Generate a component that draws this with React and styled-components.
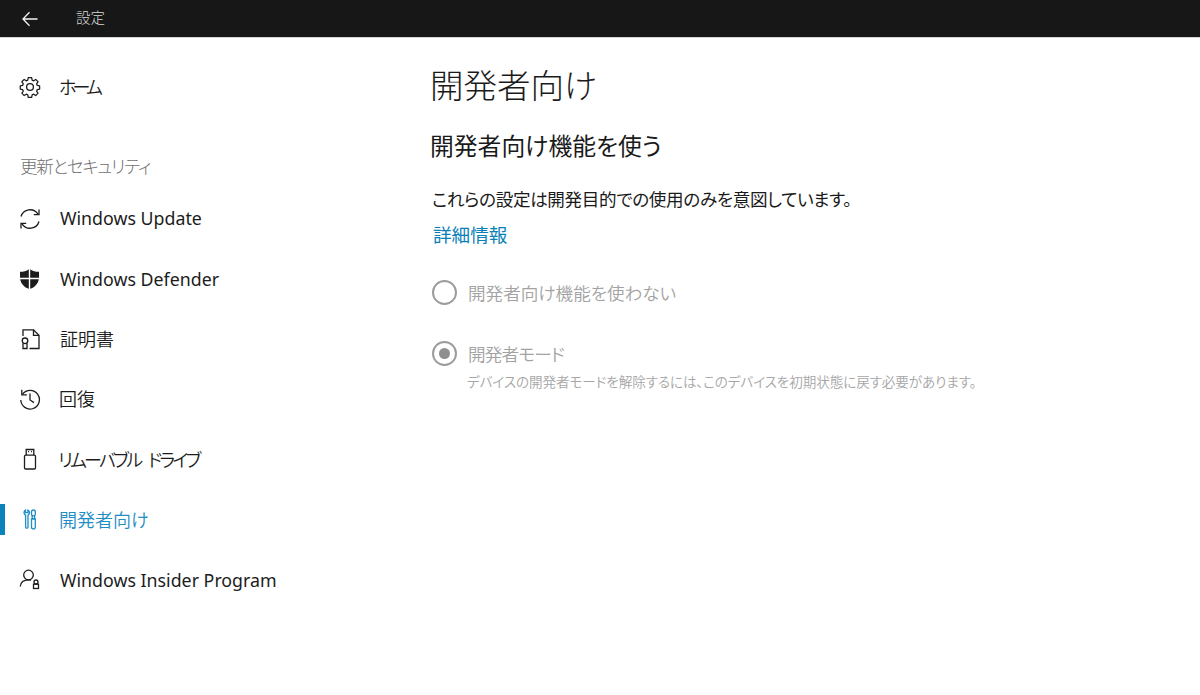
import React from "react";
import styled, { createGlobalStyle } from "styled-components";

const Global = createGlobalStyle`
  html, body { margin: 0; padding: 0; background: #fff; }
  body {
    font-family: "Noto Sans CJK JP", "Noto Sans", sans-serif;
    font-feature-settings: "palt";
    color: #1a1a1a;
  }
`;

const Page = styled.div`
  width: 1200px;
  height: 695px;
  overflow: hidden;
  display: flex;
  flex-direction: column;
`;

const TitleBar = styled.header`
  height: 37px;
  flex: none;
  display: flex;
  align-items: center;
  background: #171717;
  border-bottom: 1px solid #d4d4d4;
  padding-left: 22px;
`;

const BackIcon = styled.svg`
  width: 16px;
  height: 16px;
  margin-right: 38px;
  color: #f2f2f2;
`;

const TitleText = styled.span`
  font-size: 14.5px;
  font-weight: 300;
  margin-bottom: 4px;
  color: #d6d6d6;
`;

const Body = styled.div`
  flex: 1;
  display: flex;
`;

const Sidebar = styled.nav`
  width: 430px;
  flex: none;
  padding-top: 19px;
  display: flex;
  flex-direction: column;
`;

const NavRow = styled.div`
  position: relative;
  height: 60px;
  display: flex;
  align-items: center;
  padding-left: 19px;
  color: ${(p) => (p.$active ? "#1f8ec4" : "#1c1c1c")};
  &::before {
    content: "";
    display: ${(p) => (p.$active ? "block" : "none")};
    position: absolute;
    left: 0;
    top: 15px;
    width: 5px;
    height: 31px;
    background: #0a83bd;
  }
`;

const NavLabel = styled.span`
  font-family: ${(p) => (p.$latin ? '"Noto Sans", sans-serif' : '"Noto Sans CJK JP", sans-serif')};
  font-size: ${(p) => (p.$latin ? 17.8 : 18)}px;
  font-weight: ${(p) => (p.$latin ? 400 : 350)};
  letter-spacing: ${(p) => p.$spacing || 0}px;
  word-spacing: ${(p) => p.$wordSpacing || 0}px;
  margin-bottom: ${(p) => p.$lift ?? 2}px;
  margin-top: ${(p) => p.$drop || 0}px;
`;

const NavIcon = styled.svg`
  width: 22px;
  height: 22px;
  flex: none;
  margin-right: ${(p) => p.$gap || 19}px;
  fill: none;
  stroke: currentColor;
  stroke-width: 1.3;
`;

const SectionLabel = styled.div`
  height: 42px;
  margin: 27px 0 3px;
  padding-left: 20px;
  display: flex;
  align-items: center;
  font-size: 17.5px;
  font-weight: 300;
  letter-spacing: -1.2px;
  color: #6f6f6f;
`;

const Main = styled.main`
  flex: 1;
  padding-top: 21px;
  display: flex;
  flex-direction: column;
  align-items: flex-start;
`;

const Heading = styled.h1`
  margin: 0;
  font-size: 33.5px;
  line-height: 50px;
  font-weight: 300;
  color: #1a1a1a;
`;

const SubHeading = styled.h2`
  margin: 18px 0 0 0;
  font-size: 23.8px;
  line-height: 36px;
  font-weight: 400;
  color: #1a1a1a;
`;

const Description = styled.p`
  margin: 23px 0 0 2px;
  font-size: 17.6px;
  line-height: 26px;
  letter-spacing: -0.35px;
  font-weight: 400;
  color: #1a1a1a;
`;

const MoreLink = styled.a`
  margin: 8px 0 0 3px;
  font-size: 18.6px;
  line-height: 28px;
  color: #0a7fb8;
  font-weight: 400;
`;

const RadioRow = styled.div`
  display: flex;
  align-items: center;
  margin: ${(p) => p.$top}px 0 0 2px;
  height: 26px;
`;

const RadioCircle = styled.span`
  width: 25px;
  height: 25px;
  box-sizing: border-box;
  flex: none;
  border-radius: 50%;
  border: 2.5px solid #9c9c9c;
  margin-right: 11px;
  display: flex;
  align-items: center;
  justify-content: center;
  &::after {
    content: "";
    display: ${(p) => (p.$checked ? "block" : "none")};
    width: 11px;
    height: 11px;
    border-radius: 50%;
    background: #8f8f8f;
  }
`;

const RadioLabel = styled.span`
  font-size: 17.6px;
  font-weight: 350;
  letter-spacing: ${(p) => p.$spacing || 0}px;
  color: #a3a3a3;
`;

const Hint = styled.div`
  margin: 5px 0 0 37px;
  font-size: 13.6px;
  line-height: 20px;
  letter-spacing: -0.1px;
  font-weight: 350;
  color: #a6a6a6;
`;

const Gear = () => (
  <NavIcon viewBox="0 0 22 22" strokeLinejoin="round" $gap={18}>
    <path d="M9.2 1.8h3.6l.5 2.6 1.6.7 2.2-1.5 2.4 2.5-1.5 2.1.7 1.7 2.5.5v3.4l-2.5.5-.7 1.7 1.5 2.1-2.4 2.5-2.2-1.5-1.6.7-.5 2.6H9.2l-.5-2.6-1.6-.7-2.2 1.5-2.4-2.5 1.5-2.1-.7-1.7-2.5-.5v-3.4l2.5-.5.7-1.7-1.5-2.1 2.4-2.5 2.2 1.5 1.6-.7z" transform="translate(0.5 0) scale(0.95)" />
    <circle cx="11" cy="11" r="3.4" />
  </NavIcon>
);

const Sync = () => (
  <NavIcon viewBox="0 0 22 22">
    <path d="M2 8.5A9.4 9.4 0 0 1 19 6.2" />
    <path d="M20 1.5v5.2h-5.2" />
    <path d="M20 13.5A9.4 9.4 0 0 1 3 15.8" />
    <path d="M2 20.5v-5.2h5.2" />
  </NavIcon>
);

const Shield = () => (
  <NavIcon viewBox="0 0 22 22" style={{ stroke: "none", fill: "currentColor" }}>
    <path d="M9.8 1.2C7.5 3 4.5 3.7 1 3.8v6h8.8z" />
    <path d="M11.2 1.2c2.3 1.8 5.3 2.5 8.8 2.6v6h-8.8z" />
    <path d="M1.2 11.2h8.6v9.6C5.5 19.3 2.1 16.2 1.2 11.2z" />
    <path d="M19.8 11.2h-8.6v9.6c4.3-1.5 7.7-4.6 8.6-9.6z" />
  </NavIcon>
);

const Cert = () => (
  <NavIcon viewBox="0 0 22 22">
    <path d="M4 8V1.8h10.5L20 7.3v13.2h-9.5" />
    <path d="M14.5 1.8v5.5H20" />
    <circle cx="6" cy="12.8" r="2.8" />
    <path d="M4 15.2v5.3h4v-5.3" />
  </NavIcon>
);

const History = () => (
  <NavIcon viewBox="0 0 22 22" $gap={18}>
    <path d="M3.6 6.2A9.3 9.3 0 1 1 1.8 12" />
    <path d="M2.8 1.8v5h5" />
    <path d="M11 5.5V12l4 2.6" />
  </NavIcon>
);

const Usb = () => (
  <NavIcon viewBox="0 0 22 22" $gap={17}>
    <rect x="5.5" y="7.2" width="11" height="13.8" rx="1.2" />
    <path d="M7.2 7V1.5h7.6V7" />
    <path d="M9 3.6h1M12 3.6h1" />
  </NavIcon>
);

const Tools = () => (
  <NavIcon viewBox="0 0 22 22" $gap={18}>
    <path d="M6.5 2v2.6h2.4V2c1 .5 1.6 1.4 1.6 2.6 0 1.2-.6 2.2-1.5 2.6V19a1.2 1.2 0 0 1-2.4 0V7.2C5.6 6.8 5 5.8 5 4.6 5 3.4 5.5 2.5 6.5 2z" />
    <rect x="12.5" y="2" width="3.8" height="5.8" rx="1.9" />
    <path d="M13.2 7.8v3h2.4v-3" />
    <path d="M12.5 10.8h3.8V19a1.9 1.9 0 0 1-3.8 0z" />
  </NavIcon>
);

const Insider = () => (
  <NavIcon viewBox="0 0 22 22">
    <circle cx="9.5" cy="7" r="4.8" />
    <path d="M1.2 18.5c.5-4.4 3.6-6.7 8.3-6.7 1 0 1.9.1 2.7.4" />
    <circle cx="17" cy="14" r="2" />
    <rect x="14.5" y="16.2" width="5" height="4.3" />
  </NavIcon>
);

const items = [
  { icon: Sync, label: "Windows Update", latin: true, lift: 2 },
  { icon: Shield, label: "Windows Defender", latin: true, lift: 0 },
  { icon: Cert, label: "証明書" },
  { icon: History, label: "回復" },
  { icon: Usb, label: "リムーバブル ドライブ", spacing: -2.7, wordSpacing: 6, lift: 0 },
  { icon: Tools, label: "開発者向け", active: true, lift: 0 },
  { icon: Insider, label: "Windows Insider Program", latin: true, lift: 0, drop: 2 },
];

export default function App() {
  return (
    <Page>
      <Global />
      <TitleBar>
        <BackIcon viewBox="0 0 16 16" fill="none" stroke="currentColor" strokeWidth="1.3">
          <path d="M15.5 8H1M7.5 1.2 1 8l6.5 6.8" />
        </BackIcon>
        <TitleText>設定</TitleText>
      </TitleBar>
      <Body>
        <Sidebar>
          <NavRow>
            <Gear />
            <NavLabel $spacing={-3.8}>ホーム</NavLabel>
          </NavRow>
          <SectionLabel>更新とセキュリティ</SectionLabel>
          {items.map(({ icon: Icon, label, active, latin, spacing, wordSpacing, lift, drop }) => (
            <NavRow key={label} $active={active}>
              <Icon />
              <NavLabel $latin={latin} $spacing={spacing} $wordSpacing={wordSpacing} $lift={lift} $drop={drop}>
                {label}
              </NavLabel>
            </NavRow>
          ))}
        </Sidebar>
        <Main>
          <Heading>開発者向け</Heading>
          <SubHeading>開発者向け機能を使う</SubHeading>
          <Description>これらの設定は開発目的での使用のみを意図しています。</Description>
          <MoreLink>詳細情報</MoreLink>
          <RadioRow $top={31}>
            <RadioCircle />
            <RadioLabel>開発者向け機能を使わない</RadioLabel>
          </RadioRow>
          <RadioRow $top={35}>
            <RadioCircle $checked />
            <RadioLabel $spacing={-0.8}>開発者モード</RadioLabel>
          </RadioRow>
          <Hint>デバイスの開発者モードを解除するには、このデバイスを初期状態に戻す必要があります。</Hint>
        </Main>
      </Body>
    </Page>
  );
}
